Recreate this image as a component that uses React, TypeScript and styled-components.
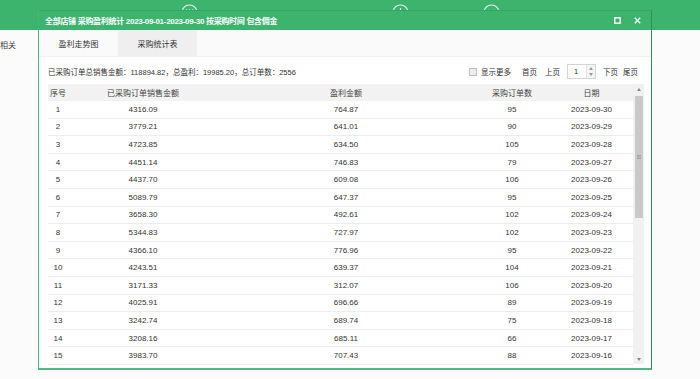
import React from "react";
import styled, { createGlobalStyle } from "styled-components";

const GlobalStyle = createGlobalStyle`
  html, body { margin: 0; padding: 0; }
  body {
    font-family: "Liberation Sans", "Noto Sans CJK SC", sans-serif;
    background: #fbfbfb;
  }
`;

const GREEN = "#3db46e";

const Page = styled.div`
  position: relative;
  width: 700px;
  height: 379px;
  overflow: hidden;
  background: #fbfbfb;
`;

const TopBar = styled.div`
  height: 30px;
  background: ${GREEN};
  display: flex;
  align-items: flex-start;
`;

const NavIcon = styled.div<{ $ml: number }>`
  margin-left: ${(p) => p.$ml}px;
  margin-top: 4px;
  width: 17px;
  height: 17px;
  display: flex;
`;

const SubNav = styled.div`
  height: 27px;
  display: flex;
  align-items: center;
  font-size: 8px;
  color: #444;
  padding-top: 1px;
`;

const Dialog = styled.div`
  position: absolute;
  left: 38px;
  top: 10px;
  width: 614px;
  height: 360px;
  box-sizing: border-box;
  background: #fff;
  border-left: 1px solid #45b877;
  border-right: 1px solid #2f8f58;
  border-bottom: 2px solid #52b880;
  display: flex;
  flex-direction: column;
`;

const TitleBar = styled.div`
  height: 20px;
  flex: none;
  background: ${GREEN};
  border-top: 1px solid #37a564;
  box-sizing: border-box;
  display: flex;
  align-items: center;
  padding: 0 7px 0 6px;
  color: #fff;
  font-size: 8px;
  font-weight: bold;
  letter-spacing: -0.3px;
`;

const TitleText = styled.div`
  flex: 1;
`;

const TitleButton = styled.div`
  width: 14px;
  height: 14px;
  display: flex;
  align-items: center;
  justify-content: center;
  margin-left: 6px;
`;

const TabBar = styled.div`
  height: 26px;
  flex: none;
  background: #fafafa;
  border-bottom: 1px solid #efefef;
  display: flex;
`;

const Tab = styled.div<{ $active?: boolean }>`
  width: 79px;
  display: flex;
  align-items: center;
  justify-content: center;
  font-size: 8px;
  color: #333;
  background: ${(p) => (p.$active ? "#efefef" : "transparent")};
`;

const Body = styled.div`
  flex: 1;
  padding: 6px 7px 0 9px;
  display: flex;
  flex-direction: column;
`;

const SummaryRow = styled.div`
  height: 17px;
  display: flex;
  align-items: center;
  justify-content: space-between;
  font-size: 7.5px;
  color: #333;
  margin-bottom: 4px;
`;

const Pager = styled.div`
  display: flex;
  align-items: center;
  padding-right: 6px;
`;

const CheckBox = styled.span`
  width: 6px;
  height: 6px;
  border: 1px solid #bdbdbd;
  background: #ededed;
  margin-right: 4px;
`;

const PagerLink = styled.span<{ $ml: number }>`
  margin-left: ${(p) => p.$ml}px;
  color: #333;
`;

const PageInput = styled.div`
  margin-left: 7px;
  width: 29px;
  height: 15px;
  border: 1px solid #d4d4d4;
  background: #fff;
  display: flex;
  align-items: center;
  justify-content: space-between;
  padding-left: 6px;
  box-sizing: border-box;
`;

const Spinner = styled.div`
  width: 8px;
  height: 13px;
  display: flex;
  flex-direction: column;
  border-left: 1px solid #e4e4e4;
`;

const SpinHalf = styled.div`
  flex: 1;
  display: flex;
  align-items: center;
  justify-content: center;
  background: #f4f4f4;
`;

const TableWrap = styled.div`
  display: flex;
  height: 280px;
`;

const Table = styled.div`
  flex: 1;
  display: flex;
  flex-direction: column;
`;

const grid = `
  display: grid;
  grid-template-columns: 20px 150px 256px 76px 1fr;
`;

const HeadRow = styled.div`
  ${grid}
  height: 17px;
  flex: none;
  background: #f2f2f2;
  font-size: 8px;
  color: #444;
  align-items: center;
`;

const Row = styled.div`
  ${grid}
  height: 17.6px;
  flex: none;
  box-sizing: border-box;
  border-bottom: 1px solid #ececec;
  font-size: 8px;
  color: #333;
  align-items: center;
`;

const Cell = styled.div`
  text-align: center;
  white-space: nowrap;
`;

const ScrollBar = styled.div`
  width: 11px;
  background: #f1f1f1;
  display: flex;
  flex-direction: column;
  align-items: center;
`;

const ScrollArrow = styled.div`
  height: 10px;
  width: 100%;
  display: flex;
  align-items: center;
  justify-content: center;
`;

const Thumb = styled.div`
  width: 8px;
  height: 122px;
  background: #c9c9c9;
  display: flex;
  align-items: center;
  justify-content: center;
  margin-top: 2px;
`;

const Spacer = styled.div`
  flex: 1;
`;

const rows: [string, string, string, string, string][] = [
  ["1", "4316.09", "764.87", "95", "2023-09-30"],
  ["2", "3779.21", "641.01", "90", "2023-09-29"],
  ["3", "4723.85", "634.50", "105", "2023-09-28"],
  ["4", "4451.14", "746.83", "79", "2023-09-27"],
  ["5", "4437.70", "609.08", "106", "2023-09-26"],
  ["6", "5089.79", "647.37", "95", "2023-09-25"],
  ["7", "3658.30", "492.61", "102", "2023-09-24"],
  ["8", "5344.83", "727.97", "102", "2023-09-23"],
  ["9", "4366.10", "776.96", "95", "2023-09-22"],
  ["10", "4243.51", "639.37", "104", "2023-09-21"],
  ["11", "3171.33", "312.07", "106", "2023-09-20"],
  ["12", "4025.91", "696.66", "89", "2023-09-19"],
  ["13", "3242.74", "689.74", "75", "2023-09-18"],
  ["14", "3208.16", "685.11", "66", "2023-09-17"],
  ["15", "3983.70", "707.43", "88", "2023-09-16"],
];

const CircleIcon = ({ inner }: { inner: React.ReactNode }) => (
  <svg width="17" height="17" viewBox="0 0 17 17">
    <circle cx="8.5" cy="8.5" r="7.5" fill="none" stroke="rgba(255,255,255,0.85)" strokeWidth="1.2" />
    {inner}
  </svg>
);

export default function App() {
  return (
    <Page>
      <GlobalStyle />
      <TopBar>
        <NavIcon $ml={181}>
          <CircleIcon
            inner={
              <g fill="rgba(255,255,255,0.85)">
                <circle cx="5.5" cy="6" r="0.8" />
                <circle cx="8.5" cy="6" r="0.8" />
                <circle cx="11.5" cy="6" r="0.8" />
              </g>
            }
          />
        </NavIcon>
        <NavIcon $ml={194}>
          <CircleIcon inner={<line x1="8.5" y1="4" x2="8.5" y2="9" stroke="rgba(255,255,255,0.85)" strokeWidth="1.2" />} />
        </NavIcon>
        <NavIcon $ml={74}>
          <CircleIcon inner={<path d="M5 6 L8.5 9 L12 6" fill="none" stroke="rgba(255,255,255,0.85)" strokeWidth="1.1" />} />
        </NavIcon>
      </TopBar>
      <SubNav>相关</SubNav>

      <Dialog>
        <TitleBar>
          <TitleText>全部店铺 采购盈利统计 2023-09-01-2023-09-30 按采购时间 包含佣金</TitleText>
          <TitleButton>
            <svg width="7" height="7" viewBox="0 0 7 7">
              <rect x="0.8" y="0.8" width="5.4" height="5.4" fill="none" stroke="#fff" strokeWidth="1.4" />
            </svg>
          </TitleButton>
          <TitleButton>
            <svg width="7" height="7" viewBox="0 0 7 7">
              <path d="M0.8 0.8 L6.2 6.2 M6.2 0.8 L0.8 6.2" stroke="#fff" strokeWidth="1.4" />
            </svg>
          </TitleButton>
        </TitleBar>
        <TabBar>
          <Tab>盈利走势图</Tab>
          <Tab $active>采购统计表</Tab>
        </TabBar>
        <Body>
          <SummaryRow>
            <span>已采购订单总销售金额：118894.82，总盈利：19985.20，总订单数：2556</span>
            <Pager>
              <CheckBox />
              <span>显示更多</span>
              <PagerLink $ml={11}>首页</PagerLink>
              <PagerLink $ml={8}>上页</PagerLink>
              <PageInput>
                <span>1</span>
                <Spinner>
                  <SpinHalf>
                    <svg width="4" height="3" viewBox="0 0 4 3">
                      <path d="M0 3 L2 0 L4 3Z" fill="#999" />
                    </svg>
                  </SpinHalf>
                  <SpinHalf>
                    <svg width="4" height="3" viewBox="0 0 4 3">
                      <path d="M0 0 L2 3 L4 0Z" fill="#999" />
                    </svg>
                  </SpinHalf>
                </Spinner>
              </PageInput>
              <PagerLink $ml={7}>下页</PagerLink>
              <PagerLink $ml={5}>尾页</PagerLink>
            </Pager>
          </SummaryRow>
          <TableWrap>
            <Table>
              <HeadRow>
                <Cell>序号</Cell>
                <Cell>已采购订单销售金额</Cell>
                <Cell>盈利金额</Cell>
                <Cell>采购订单数</Cell>
                <Cell>日期</Cell>
              </HeadRow>
              {rows.map((r) => (
                <Row key={r[0]}>
                  {r.map((c, i) => (
                    <Cell key={i}>{c}</Cell>
                  ))}
                </Row>
              ))}
            </Table>
            <ScrollBar>
              <ScrollArrow>
                <svg width="4" height="3" viewBox="0 0 4 3">
                  <path d="M0 3 L2 0 L4 3Z" fill="#888" />
                </svg>
              </ScrollArrow>
              <Thumb>
                <svg width="4" height="4" viewBox="0 0 4 4">
                  <path d="M0 0.5 H4 M0 2 H4 M0 3.5 H4" stroke="#888" strokeWidth="0.6" />
                </svg>
              </Thumb>
              <Spacer />
              <ScrollArrow>
                <svg width="4" height="3" viewBox="0 0 4 3">
                  <path d="M0 0 L2 3 L4 0Z" fill="#888" />
                </svg>
              </ScrollArrow>
            </ScrollBar>
          </TableWrap>
        </Body>
      </Dialog>
    </Page>
  );
}
